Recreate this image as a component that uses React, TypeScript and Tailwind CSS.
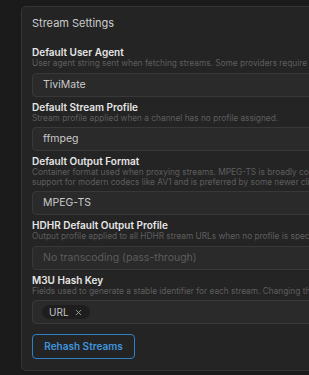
import { X } from "lucide-react";

const font = { fontFamily: "Inter, 'Noto Sans', sans-serif" };

function Field({
  label,
  desc,
  children,
}: {
  label: string;
  desc: string[];
  children: React.ReactNode;
}) {
  return (
    <div className="flex flex-col">
      <div className="text-[10px] leading-[14px] font-semibold text-[#e6e6e6] whitespace-nowrap">{label}</div>
      {desc.map((d, i) => (
        <div key={i} className="text-[8.3px] leading-[9.5px] text-[#5e5e5e] whitespace-nowrap">
          {d}
        </div>
      ))}
      <div className="mt-[4px]">{children}</div>
    </div>
  );
}

function Input({ value, dim }: { value: string; dim?: boolean }) {
  return (
    <div
      className={`h-[24px] flex items-center pl-[10px] rounded-[4px] border border-[#383838] bg-[#2a2a2a] text-[10.5px] ${
        dim ? "text-[#5c5c5c]" : "text-[#c9c9c9]"
      }`}
    >
      {value}
    </div>
  );
}

export default function App() {
  return (
    <div className="w-[309px] h-[375px] overflow-hidden bg-[#1b1b1b] pt-[6px] pl-[21px]" style={font}>
      <div className="w-[480px] rounded-[5px] border border-[#353535] bg-[#242424] px-[10px] pt-[9px] pb-[11px]">
        <div className="text-[11px] leading-[15px] text-[#cccccc]">Stream Settings</div>
        <div className="mt-[14px] flex flex-col gap-[3px]">
          <Field
            label="Default User Agent"
            desc={["User agent string sent when fetching streams. Some providers require a specific user agent."]}
          >
            <Input value="TiviMate" />
          </Field>
          <Field label="Default Stream Profile" desc={["Stream profile applied when a channel has no profile assigned."]}>
            <Input value="ffmpeg" />
          </Field>
          <Field
            label="Default Output Format"
            desc={[
              "Container format used when proxying streams. MPEG-TS is broadly compatible; Matroska adds",
              "support for modern codecs like AV1 and is preferred by some newer clients.",
            ]}
          >
            <Input value="MPEG-TS" />
          </Field>
          <Field
            label="HDHR Default Output Profile"
            desc={["Output profile applied to all HDHR stream URLs when no profile is specified in the URL."]}
          >
            <Input value="No transcoding (pass-through)" dim />
          </Field>
          <Field
            label="M3U Hash Key"
            desc={["Fields used to generate a stable identifier for each stream. Changing this requires a rehash."]}
          >
            <div className="h-[24px] flex items-center pl-[9px] rounded-[4px] border border-[#383838] bg-[#2a2a2a]">
              <span className="flex items-center gap-[5px] h-[14px] px-[7px] rounded-full bg-[#1e1e1e] text-[10px] text-[#c4c4c4]">
                URL
                <X size={9} strokeWidth={2} className="text-[#bdbdbd]" />
              </span>
            </div>
          </Field>
        </div>
        <button className="mt-[10px] h-[25px] w-[103px] rounded-[4px] border border-[#2f80c6] bg-[#242424] text-[10px] font-semibold text-[#3f95df]">
          Rehash Streams
        </button>
      </div>
    </div>
  );
}
